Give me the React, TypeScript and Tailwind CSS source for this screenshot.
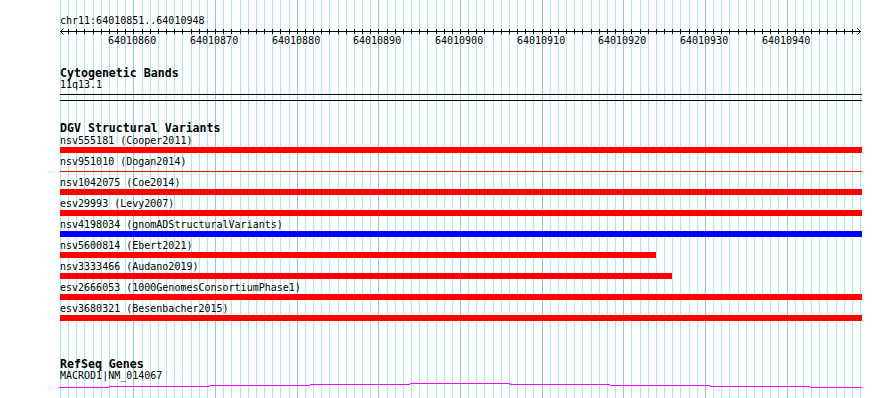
import React from 'react';

// view: 64010851..64010948 drawn from x=60 to x=860
const VIEW_LEFT = 60;
const BP_START = 64010851;
const BP_COUNT = 98;
const PX_PER_BP = 800 / BP_COUNT;
const TRACK_W = 802;

const bpX = (i: number) => Math.round(VIEW_LEFT + i * PX_PER_BP);

interface Variant {
  id: string;
  study: string;
  color: string;
  width?: number;
  thin?: boolean;
}

const variants: Variant[] = [
  { id: 'nsv555181', study: 'Cooper2011', color: 'bg-[#ff0000]' },
  { id: 'nsv951010', study: 'Dogan2014', color: 'bg-[#ff0000]', thin: true },
  { id: 'nsv1042075', study: 'Coe2014', color: 'bg-[#ff0000]' },
  { id: 'esv29993', study: 'Levy2007', color: 'bg-[#ff0000]' },
  { id: 'nsv4198034', study: 'gnomADStructuralVariants', color: 'bg-[#0000ff]' },
  { id: 'nsv5600814', study: 'Ebert2021', color: 'bg-[#ff0000]', width: 596 },
  { id: 'nsv3333466', study: 'Audano2019', color: 'bg-[#ff0000]', width: 612 },
  { id: 'esv2666053', study: '1000GenomesConsortiumPhase1', color: 'bg-[#ff0000]' },
  { id: 'esv3680321', study: 'Besenbacher2015', color: 'bg-[#ff0000]' },
];

// intron line of the gene, drawn as 1px steps
const geneSteps: [number, number, number][] = [
  [59, 109, 387],
  [109, 210, 386],
  [210, 310, 385],
  [310, 410, 384],
  [410, 510, 383],
  [510, 610, 384],
  [610, 710, 385],
  [710, 810, 386],
  [810, 862, 387],
];

const Grid = () => (
  <div className="absolute inset-0 pointer-events-none">
    {Array.from({ length: BP_COUNT + 1 }, (_, i) => {
      const major = (BP_START + i) % 10 === 0;
      return (
        <div
          key={i}
          className={`absolute top-0 bottom-0 w-px ${major ? 'bg-[#8cc6e6]' : 'bg-[#a6e9ee]'}`}
          style={{ left: bpX(i) }}
        />
      );
    })}
  </div>
);

const Ruler = () => (
  <svg width={TRACK_W} height={10} className="block" shapeRendering="crispEdges">
    <line x1={0} y1={5.5} x2={801} y2={5.5} stroke="#000" strokeWidth={1} />
    {Array.from({ length: BP_COUNT - 1 }, (_, k) => {
      const x = bpX(k + 1) - VIEW_LEFT + 0.5;
      return <line key={k} x1={x} y1={3} x2={x} y2={8} stroke="#000" strokeWidth={1} />;
    })}
    <polyline points="3.5,2.5 0.5,5.5 3.5,8.5" fill="none" stroke="#000" strokeWidth={1} shapeRendering="auto" />
    <polyline points="797.5,2.5 800.5,5.5 797.5,8.5" fill="none" stroke="#000" strokeWidth={1} shapeRendering="auto" />
  </svg>
);

const RulerLabels = () => (
  <div className="relative h-[10px] text-[10px] leading-[10px]">
    {Array.from({ length: BP_COUNT + 1 }, (_, i) => i)
      .filter((i) => (BP_START + i) % 10 === 0)
      .map((i) => (
        <span key={i} className="absolute top-0 whitespace-pre" style={{ left: bpX(i) - VIEW_LEFT - 25 }}>
          {BP_START + i}
        </span>
      ))}
  </div>
);

const TrackTitle = ({ children, className = '' }: { children: React.ReactNode; className?: string }) => (
  <div className={`h-[12px] text-[11.6px] leading-[12px] font-bold whitespace-pre ${className}`}>{children}</div>
);

const Label = ({ children, className = '' }: { children: React.ReactNode; className?: string }) => (
  <div className={`h-[10px] text-[10px] leading-[10px] whitespace-pre ${className}`}>{children}</div>
);

export default function App() {
  return (
    <div className="relative w-[890px] h-[398px] overflow-hidden bg-white text-black font-['DejaVu_Sans_Mono',monospace]">
      <Grid />

      <div className="relative flex flex-col pl-[60px] pt-[16px]">
        <Label>chr11:64010851..64010948</Label>
        <Ruler />
        <RulerLabels />

        {/* Cytogenetic Bands */}
        <TrackTitle className="mt-[21px]">Cytogenetic Bands</TrackTitle>
        <Label className="mt-[1px]">11q13.1</Label>
        <div className="mt-[4px] h-px w-[802px] bg-black" />
        <div className="mt-[5px] h-px w-[802px] bg-black" />

        {/* DGV Structural Variants */}
        <TrackTitle className="mt-[21px]">DGV Structural Variants</TrackTitle>
        <div className="mt-[2px] flex flex-col">
          {variants.map((v) => (
            <div key={v.id} className="flex flex-col pb-[4px]">
              <Label>{`${v.id} (${v.study})`}</Label>
              <div className="mt-[1px] h-[6px]">
                {v.thin ? (
                  <div className={`mt-[3px] h-px ${v.color}`} style={{ width: TRACK_W }} />
                ) : (
                  <div className={`h-[6px] ${v.color}`} style={{ width: v.width ?? TRACK_W }} />
                )}
              </div>
            </div>
          ))}
        </div>

        {/* RefSeq Genes */}
        <TrackTitle className="mt-[33px]">RefSeq Genes</TrackTitle>
        <Label className="mt-[1px]">MACROD1|NM_014067</Label>
        <svg width={TRACK_W + 2} height={8} className="block -ml-px" shapeRendering="crispEdges">
          {geneSteps.map(([x1, x2, y]) => (
            <rect key={x1} x={x1 - VIEW_LEFT + 1} y={y - 381} width={x2 - x1} height={1} fill="#ff00ff" />
          ))}
        </svg>
      </div>
    </div>
  );
}
